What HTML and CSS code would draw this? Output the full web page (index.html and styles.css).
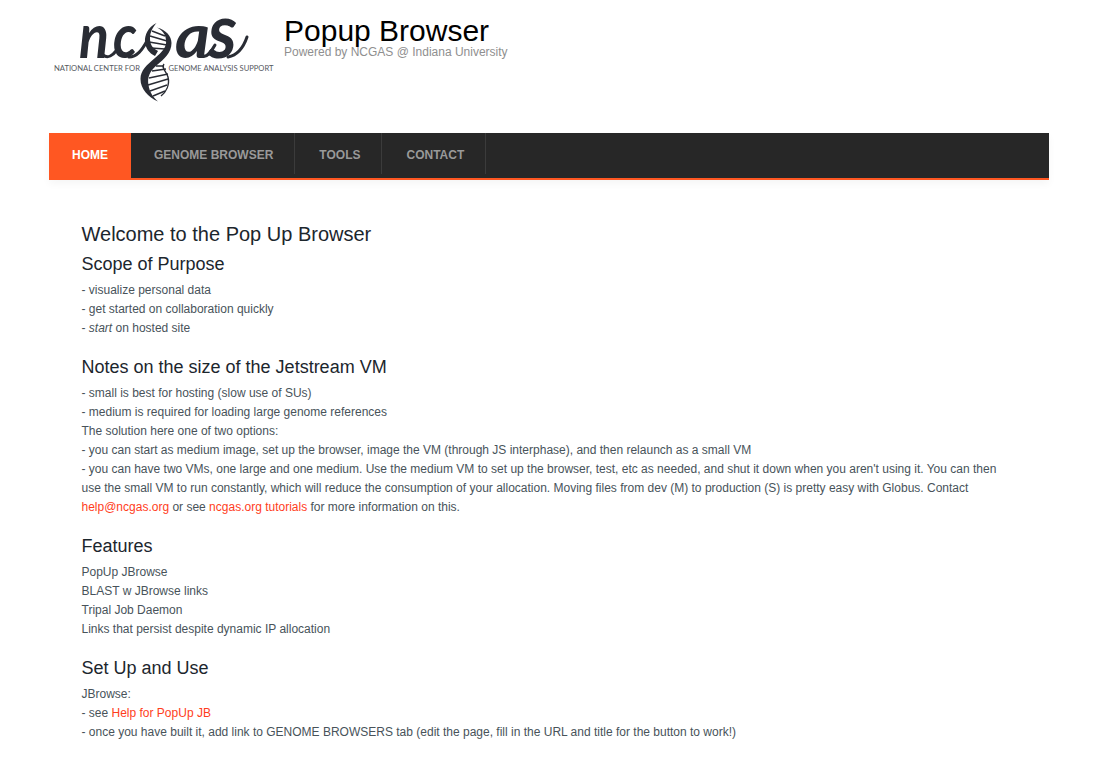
FILE: index.html
```html
<!DOCTYPE html>
<html lang="en">
<head>
<meta charset="utf-8">
<title>Popup Browser</title>
<link rel="stylesheet" href="styles.css">
</head>
<body>
<div class="page">
  <header class="header">
    <svg class="logo" width="230" height="110" viewBox="49 0 230 110" role="img" aria-label="NCGAS">
      <g class="script">
        <text x="79" y="58" textLength="30" lengthAdjust="spacingAndGlyphs">n</text>
        <text x="113" y="58" textLength="24" lengthAdjust="spacingAndGlyphs">c</text>
        <text x="175" y="58" textLength="35" lengthAdjust="spacingAndGlyphs">a</text>
        <text class="tall" x="208" y="58" textLength="29" lengthAdjust="spacingAndGlyphs">s</text>
      </g>
      <g class="swash">
        <path d="M103 55C108 59 113 55 116 51"/>
        <path d="M129 57C137 57 142 50 147 41"/>
        <path d="M202 56C207 58 211 52 215 45"/>
        <path d="M228 57C238 55 244 46 247 37"/>
      </g>
      <path class="strand" d="M156.500 23C148 27 144.500 35 145 42C145.500 48 149 53 155 56L158 51C152 48 150 44 150 38C150 32 153 27 156.500 23Z"/>
      <path class="strand" d="M157 27.500C166 30 171.500 36 171.500 43C171.500 53 164 59 157 65C150 71 147 77 148.500 85C149.500 92 153 97 158 101.500C148 97 140.500 89 140.500 79C140.500 70 147 65 155 58C162 52 167 47 166 40C165.500 34 162 30 157 27.500Z"/>
      <g class="rungs">
        <path d="M152 31L165 36M150 36L167 41M149 42L167 45M151 48L165 49M156 66H164M152 71L166 69M149 78L168 74M148 85L168 79M150 91L167 85M153 96L165 91"/>
        <path d="M164 64C161 68 166 71 168 77C170 85 166 92 161 96"/>
      </g>
      <g class="caption">
        <text x="54" y="71" textLength="86" lengthAdjust="spacingAndGlyphs">NATIONAL CENTER FOR</text>
        <text x="168.500" y="71" textLength="105" lengthAdjust="spacingAndGlyphs">GENOME ANALYSIS SUPPORT</text>
      </g>
    </svg>
    <div class="branding">
      <div class="site-name">Popup Browser</div>
      <div class="slogan">Powered by NCGAS @ Indiana University</div>
    </div>
  </header>
  <nav class="menu">
    <a class="item active">HOME</a>
    <a class="item first">GENOME BROWSER</a>
    <a class="item">TOOLS</a>
    <a class="item">CONTACT</a>
  </nav>
  <main class="content">
    <h2>Welcome to the Pop Up Browser</h2>
    <h3>Scope of Purpose</h3>
    <p>- visualize personal data<br>- get started on collaboration quickly<br>- <em>start</em> on hosted site</p>
    <h3>Notes on the size of the Jetstream VM</h3>
    <p>- small is best for hosting (slow use of SUs)<br>- medium is required for loading large genome references<br>The solution here one of two options:<br>- you can start as medium image, set up the browser, image the VM (through JS interphase), and then relaunch as a small VM<br>- you can have two VMs, one large and one medium. Use the medium VM to set up the browser, test, etc as needed, and shut it down when you aren't using it. You can then<br>use the small VM to run constantly, which will reduce the consumption of your allocation. Moving files from dev (M) to production (S) is pretty easy with Globus. Contact<br><a>help@ncgas.org</a> or see <a>ncgas.org tutorials</a> for more information on this.</p>
    <h3>Features</h3>
    <p>PopUp JBrowse<br>BLAST w JBrowse links<br>Tripal Job Daemon<br>Links that persist despite dynamic IP allocation</p>
    <h3>Set Up and Use</h3>
    <p>JBrowse:<br>- see <a>Help for PopUp JB</a><br>- once you have built it, add link to GENOME BROWSERS tab (edit the page, fill in the URL and title for the button to work!)</p>
  </main>
</div>
</body>
</html>
```
FILE: styles.css
```css
body {
  margin: 0;
  background: #fff;
  color: #48535a;
  font: 12px/19px "Liberation Sans", Arial, sans-serif;
  overflow: hidden;
}
.page { width: 1000px; margin-left: 49px; }
.header { display: flex; gap: 5px; height: 133px; }
.logo { flex: none; overflow: visible; }
.script { font: italic 700 62px Lato, sans-serif; fill: #292c34; }
.tall { font-size: 76px; }
.swash { fill: none; stroke: #292c34; stroke-width: 3; stroke-linecap: round; }
.strand { fill: #292c34; }
.rungs { fill: none; stroke: #292c34; stroke-width: 1.4; }
.caption { font: 7.5px Lato, sans-serif; fill: #55585e; }
.branding { padding-top: 15px; }
.site-name { color: #000; font-size: 30px; line-height: 32px; }
.slogan { margin-top: -1px; color: #8f8f8f; line-height: 12px; }
.menu {
  display: flex;
  height: 45px;
  background: #272727;
  border-bottom: 2px solid #ff5722;
  box-shadow: 0 4px 8px rgba(0, 0, 0, 0.04);
}
.item {
  box-sizing: border-box;
  height: 41px;
  padding: 0 21px 0 24px;
  border-right: 1px solid #3b3b3b;
  color: #999;
  font-weight: bold;
  line-height: 44px;
}
.first { padding-left: 23px; }
.active {
  height: 46px;
  padding: 0 23px;
  border: 0;
  background: #ff5722;
  color: #fff;
}
.content { padding: 44px 32px 0 32.5px; white-space: nowrap; }
h2, h3 { margin: 0; color: #1c262d; font-weight: normal; }
h2 { font-size: 20px; line-height: 20px; margin-bottom: 11px; }
h3 { font-size: 18px; line-height: 19px; margin-bottom: 7px; }
p { margin: 0 0 20px; }
p a { color: #ff3d1c; }
```
